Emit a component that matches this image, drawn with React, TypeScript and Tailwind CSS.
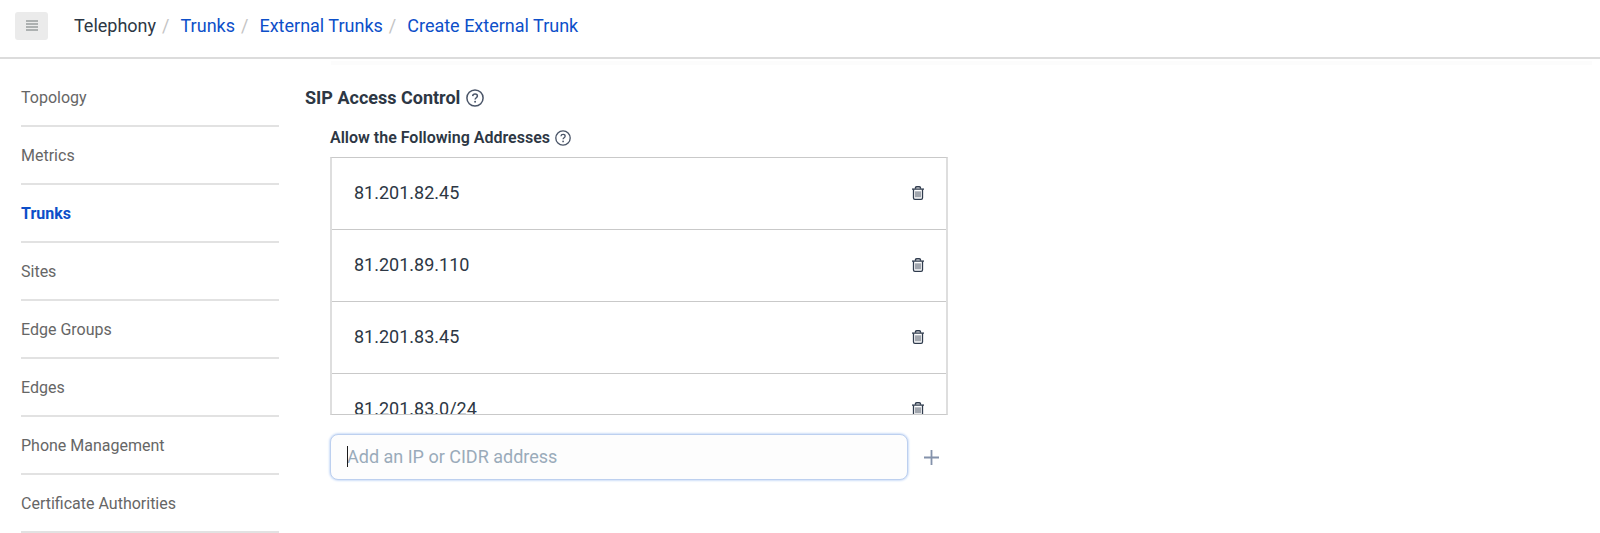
import React from "react";

const NAV = [
  "Topology",
  "Metrics",
  "Trunks",
  "Sites",
  "Edge Groups",
  "Edges",
  "Phone Management",
  "Certificate Authorities",
];

const CRUMBS = ["Trunks", "External Trunks", "Create External Trunk"];

const ADDRESSES = ["81.201.82.45", "81.201.89.110", "81.201.83.45", "81.201.83.0/24"];

function HelpIcon({ className }: { className: string }) {
  return (
    <svg viewBox="0 0 18 18" fill="none" stroke="#4a5568" className={className} aria-hidden="true">
      <circle cx="9" cy="9" r="8.1" strokeWidth="1.5" />
      <path d="M6.7 7.1C6.8 5.7 7.8 5 9.1 5c1.3 0 2.3.8 2.3 2 0 1.7-2.3 1.8-2.3 3.5" strokeWidth="1.5" />
      <circle cx="9.1" cy="12.8" r=".95" fill="#4a5568" stroke="none" />
    </svg>
  );
}

function TrashIcon() {
  return (
    <svg viewBox="0 0 12 14" fill="none" stroke="#2f3b4d" className="h-[14px] w-3" aria-hidden="true">
      <path d="M3.5 2.8V2Q3.5.8 4.7.8h2.6q1.2 0 1.2 1.2v.8" strokeWidth="1.4" />
      <path d="M0 3.1h12" strokeWidth="1.3" />
      <path d="M1.5 3.3v8.6q0 1.4 1.4 1.4h6.2q1.4 0 1.4-1.4V3.3" strokeWidth="1.3" />
      <path d="M4 5.3v6M6 5.3v6M8 5.3v6" strokeWidth=".9" />
    </svg>
  );
}

export default function App() {
  return (
    <div className="flex h-screen flex-col overflow-hidden bg-white font-['Roboto',sans-serif] text-[#2d3744]">
      <header className="flex shrink-0 items-center border-b-2 border-[#dcdcdc] pt-3 pb-[17px] pl-[15px]">
        <button
          type="button"
          aria-label="Toggle menu"
          className="flex h-7 w-[33px] items-center justify-center rounded-[3px] bg-[#ebebeb] pb-px"
        >
          <svg viewBox="0 0 12 11" fill="#adb1b1" className="h-[11px] w-3" aria-hidden="true">
            <path d="M0 0h12v1.9H0zM0 3h12v1.9H0zM0 6h12v1.9H0zM0 9h12v1.9H0z" />
          </svg>
        </button>
        <nav aria-label="Breadcrumb" className="ml-[26px] flex text-lg leading-7">
          <span>Telephony</span>
          {CRUMBS.map((crumb) => (
            <span key={crumb} className="flex">
              <span className="mr-[11px] ml-[6px] text-[#c4c4c4]">/</span>
              <a href="#" className="text-[#0d4fc9]">
                {crumb}
              </a>
            </span>
          ))}
        </nav>
      </header>

      <div className="flex min-h-0 flex-1">
        <nav aria-label="Telephony" className="w-[279px] shrink-0 pt-[10px] pl-[21px]">
          <ul>
            {NAV.map((item) => (
              <li key={item} className="border-b-2 border-[#e2e2e2]">
                <a
                  href="#"
                  className={
                    item === "Trunks"
                      ? "block pt-[17px] pb-[15px] text-base leading-6 font-bold text-[#0d4fc9]"
                      : "block pt-[17px] pb-[15px] text-base leading-6 text-[#666666]"
                  }
                >
                  {item}
                </a>
              </li>
            ))}
          </ul>
        </nav>

        <main className="min-w-0 flex-1 pl-[26px]">
          <div className="mr-2 ml-[26px] pt-[2px]">
            <div className="h-1 bg-[#fcfcfc]" />
          </div>
          <h2 className="mt-[21px] flex items-center gap-[6px] text-lg leading-6 font-bold">
            SIP Access Control
            <HelpIcon className="h-[18px] w-[18px]" />
          </h2>
          <div className="ml-[25px] w-[618px] max-w-full">
            <h3 className="mt-4 flex items-center gap-[5px] text-base leading-6 font-semibold">
              <label htmlFor="address">Allow the Following Addresses</label>
              <HelpIcon className="h-4 w-4" />
            </h3>
            <ul className="mt-[7px] h-[258px] overflow-hidden border-x-2 border-y border-x-[#dedede] border-y-[#c9c9c9]">
              {ADDRESSES.map((address) => (
                <li
                  key={address}
                  className="flex h-[72px] items-center justify-between border-b border-[#c9c9c9] px-[22px] pb-[2px] text-lg"
                >
                  {address}
                  <button type="button" aria-label={`Delete ${address}`}>
                    <TrashIcon />
                  </button>
                </li>
              ))}
            </ul>
            <div className="mt-[19px] flex items-center">
              <div className="relative min-w-0 flex-1">
                <input
                  id="address"
                  type="text"
                  placeholder="Add an IP or CIDR address"
                  className="block h-[46px] w-full rounded-lg border border-[#bdd0ef] bg-[#fdfdfd] px-4 pb-[2px] text-lg shadow-[0_0_2px_1px_#cfdff8] outline-none placeholder:text-[#9aabba]"
                />
                <span className="absolute top-[12px] left-[17px] h-[21px] w-px bg-[#1a1a1a]" />
              </div>
              <button type="button" aria-label="Add address" className="mr-[9px] ml-4">
                <svg viewBox="0 0 15 15" fill="none" stroke="#8492ab" className="h-[15px] w-[15px]" aria-hidden="true">
                  <path d="M7.5 0v15M0 7.5h15" strokeWidth="1.8" />
                </svg>
              </button>
            </div>
          </div>
        </main>
      </div>
    </div>
  );
}
